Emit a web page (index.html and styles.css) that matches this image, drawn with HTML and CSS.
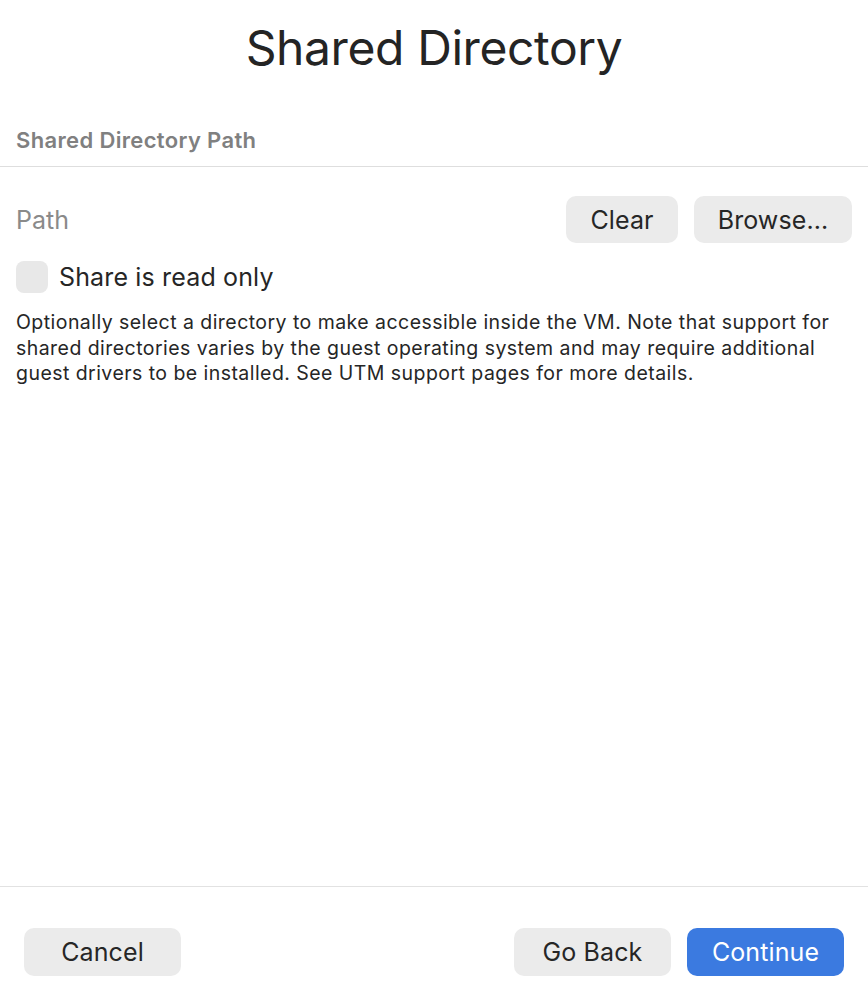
FILE: index.html
```html
<!DOCTYPE html>
<html lang="en">
<head>
<meta charset="utf-8">
<title>Shared Directory</title>
<link rel="stylesheet" href="styles.css">
</head>
<body>
<div class="window">
  <h1 class="title">Shared Directory</h1>
  <div class="section-label">Shared Directory Path</div>
  <div class="content">
    <div class="path-row">
      <span class="path-label">Path</span>
      <div class="path-actions">
        <button class="btn btn-small">Clear</button>
        <button class="btn btn-browse">Browse...</button>
      </div>
    </div>
    <label class="check-row">
      <span class="checkbox"></span>
      <span class="check-text">Share is read only</span>
    </label>
    <p class="description">Optionally select a directory to make accessible inside the VM. Note that support for shared directories varies by the guest operating system and may require additional guest drivers to be installed. See UTM support pages for more details.</p>
  </div>
  <div class="footer">
    <button class="btn btn-footer">Cancel</button>
    <div class="footer-right">
      <button class="btn btn-footer">Go Back</button>
      <button class="btn btn-footer btn-primary">Continue</button>
    </div>
  </div>
</div>
</body>
</html>
```

FILE: styles.css
```css
* { box-sizing: border-box; }
html, body { margin: 0; padding: 0; background: #ffffff; }
body {
  font-family: Inter, "Liberation Sans", Arial, sans-serif;
  color: #262626;
}
.window {
  width: 868px;
  height: 1000px;
  display: flex;
  flex-direction: column;
}
.title {
  margin: 0;
  height: 100px;
  padding-top: 20px;
  font-size: 48px;
  line-height: 56px;
  font-weight: 400;
  text-align: center;
  letter-spacing: -0.4px;
  color: #242424;
}
.section-label {
  padding: 28px 16px 14px;
  font-size: 22px;
  line-height: 24px;
  font-weight: 600;
  letter-spacing: 0.35px;
  color: #808080;
  border-bottom: 1px solid #dedede;
}
.content {
  flex: 1;
  padding: 0 16px;
}
.path-row {
  margin-top: 29px;
  display: flex;
  align-items: center;
  justify-content: space-between;
}
.path-label {
  font-size: 25px;
  color: #8a8a8a;
}
.path-actions {
  display: flex;
  gap: 16px;
}
.btn {
  font-family: inherit;
  border: none;
  background: #ebebeb;
  color: #262626;
  font-size: 25px;
  letter-spacing: 0.1px;
  height: 47px;
  border-radius: 10px;
  padding: 0;
  cursor: default;
}
.btn-small { width: 112px; }
.btn-browse { width: 158px; }
.check-row {
  margin-top: 18px;
  display: flex;
  align-items: center;
  gap: 11px;
}
.checkbox {
  width: 32px;
  height: 32px;
  border-radius: 8px;
  background: #e8e8e8;
}
.check-text {
  font-size: 25px;
  letter-spacing: 0.15px;
  color: #262626;
}
.description {
  margin: 17px 0 0;
  font-size: 19.5px;
  line-height: 25.5px;
  letter-spacing: 0.45px;
  color: #262626;
}
.footer {
  border-top: 1px solid #e2e2e2;
  height: 114px;
  padding: 41px 24px 0;
  display: flex;
  justify-content: space-between;
  align-items: flex-start;
}
.footer-right {
  display: flex;
  gap: 16px;
}
.btn-footer {
  width: 157px;
  height: 48px;
}
.btn-primary {
  background: #3b7ae0;
  color: #ffffff;
}
```
